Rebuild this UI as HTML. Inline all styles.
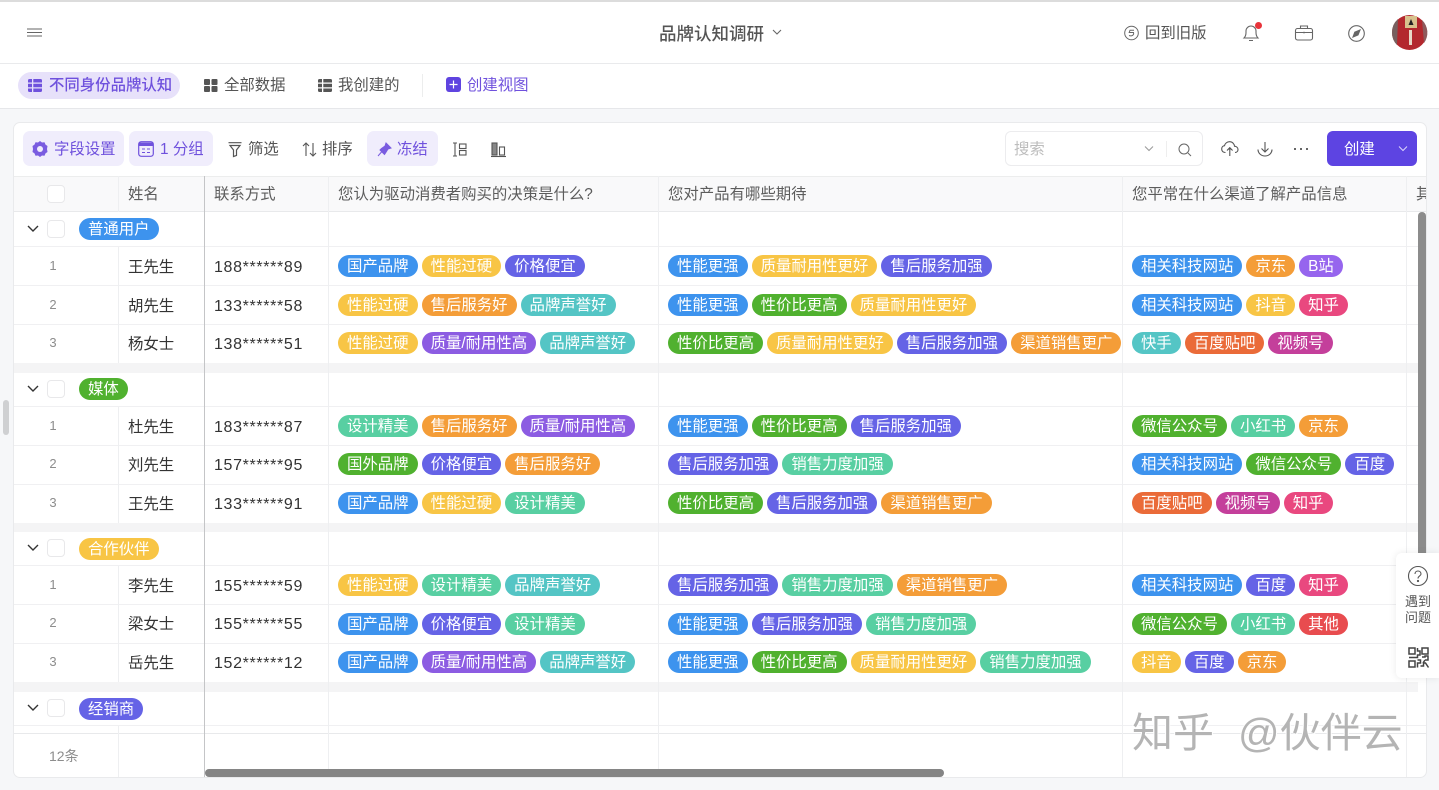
<!DOCTYPE html>
<html lang="zh-CN"><head><meta charset="utf-8"><title>品牌认知调研</title>
<style>
*{box-sizing:border-box}
html,body{margin:0;padding:0;width:1439px;height:790px;overflow:hidden;background:#f6f7f9;font-family:"Liberation Sans","Noto Sans CJK SC",sans-serif;color:#555}
.a{position:absolute;white-space:nowrap}
.l{position:absolute}
.hl{position:absolute;left:14px;width:1412px;height:1px;background:#f0f0f2}
.v{position:absolute;width:1px;background:#eeeff1}
.gap{position:absolute;left:14px;width:1404px;background:#f4f4f5}
.th{position:absolute;top:185px;font-size:15.4px;line-height:20px;color:#5c5c5c;white-space:nowrap}
.n{position:absolute;left:47px;width:12px;text-align:center;font-size:13px;line-height:16px;color:#8d8d8d}
.nm{position:absolute;left:128px;margin-top:1px;font-size:15.4px;line-height:20px;color:#333;white-space:nowrap}
.ph{position:absolute;left:214px;margin-top:1px;font-size:16px;letter-spacing:.65px;line-height:20px;color:#333;white-space:nowrap}
.cb{position:absolute;left:47px;width:18px;height:18px;border:1px solid #e8e8ea;border-radius:4px;background:#fff}
.ts{position:absolute;display:flex;gap:4px;height:22px}
.t{display:block;height:22px;line-height:24px;border-radius:11px;padding:0 9px;color:#fff;font-size:15.4px;white-space:nowrap}
.gt{position:absolute;left:79px;height:22px;line-height:24px;border-radius:11px;padding:0 9px;color:#fff;font-size:15.4px;white-space:nowrap}
.b{background:#3d93ee}.y{background:#f8c545}.i{background:#6563e6}.o{background:#f49d38}.c{background:#54c5c5}.p{background:#8c5ce2}.m{background:#58cfa2}.g{background:#50b12f}.k{background:#e9487f}.w{background:#c43f9b}.r{background:#ea6b39}.d{background:#e84c4f}.s{background:#9665ee}
.btn{position:absolute;top:131px;height:35px;background:#f0edfc;border-radius:7px}
.pur{color:#6f51dd;font-size:15.4px;line-height:20px;position:absolute;top:140px;white-space:nowrap}
.tool{color:#555;font-size:15.4px;line-height:20px;position:absolute;top:140px;white-space:nowrap}
svg{position:absolute;overflow:visible}
</style></head><body>

<!-- header -->
<div class="l" style="left:0;top:0;width:1439px;height:64px;background:#fff;border-top:1px solid #dcdcdc;border-bottom:1px solid #e9eaec;box-shadow:inset 0 1px 0 #dcdcdc"></div>
<svg style="left:27px;top:28px" width="16" height="10" fill="none" stroke="#666" stroke-width="1.1"><path d="M0 1h15M0 4.500h15M0 8h15"/></svg>
<div class="a" style="left:659px;top:23px;font-size:17.500px;line-height:22px;color:#555;font-weight:500">品牌认知调研</div>
<svg style="left:772px;top:29px" width="10" height="7" fill="none" stroke="#666" stroke-width="1.1"><path d="M1 1l4 4 4-4"/></svg>
<svg style="left:1124px;top:25px" width="16" height="16" fill="none" stroke="#666" stroke-width="1"><circle cx="7.500" cy="8" r="6.800"/><path d="M10 5.200H6L5.200 7.500h4.300c.7 2.500-1.500 4-4.500 3"/></svg>
<div class="a" style="left:1145px;top:23px;font-size:15.4px;line-height:21px;color:#555">回到旧版</div>
<svg style="left:1243px;top:24px" width="18" height="18" fill="none" stroke="#666" stroke-width="1.1"><path d="M1 14h14c-1.500-1.500-2-3-2-5.500V7a5 5 0 0 0-10 0v1.500C3 11 2.500 12.500 1 14zM6 16.500h4"/></svg>
<div class="l" style="left:1255px;top:22px;width:7px;height:7px;border-radius:50%;background:#e8333a"></div>
<svg style="left:1295px;top:25px" width="18" height="16" fill="none" stroke="#666" stroke-width="1.1"><rect x=".5" y="3.500" width="17" height="11.500" rx="2"/><path d="M5.500 3.500V1h7v2.500M.5 7.500h17M9 6.800v1.600"/></svg>
<svg style="left:1348px;top:25px" width="17" height="17" fill="none" stroke="#666" stroke-width="1.1"><circle cx="8.500" cy="8.500" r="7.800"/><path d="M12 5l-5.200 2.200L5 12l5-2z" fill="#666"/></svg>
<svg style="left:1392px;top:15px" width="35" height="35"><circle cx="17.500" cy="17.500" r="17.500" fill="#b3282e"/><path d="M6 4A17.500 17.500 0 0 0 0 17.500 17.500 17.500 0 0 0 5 30z" fill="#77605f"/><path d="M30 5a17.500 17.500 0 0 1 2 23z" fill="#8e5a5c"/><rect x="13" y="1" width="12" height="12" fill="#d8c28d"/><path d="M19 4l2.500 6h-5z" fill="#222"/><rect x="17" y="15" width="3" height="15" fill="#e8d8c8"/></svg>

<!-- view tabs -->
<div class="l" style="left:0;top:64px;width:1439px;height:45px;background:#fff;border-bottom:1px solid #e6e7ea"></div>
<div class="l" style="left:18px;top:72px;height:27px;width:162px;border-radius:14px;background:#e7e1fa"></div>
<svg style="left:28px;top:79px" width="14" height="13"><path d="M0 1.500Q0 0 1.500 0H4v3.500H0zM0 4.800h4v3.400H0zM0 9.500h4V13H1.500Q0 13 0 11.500zM5.300 0h7.200Q14 0 14 1.500v2H5.300zM5.300 4.800H14v3.400H5.300zM5.300 9.500H14v2q0 1.500-1.500 1.500H5.300z" fill="#6f51dd"/></svg>
<div class="a" style="left:49px;top:75px;font-size:15.4px;line-height:21px;color:#6f51dd;font-weight:500">不同身份品牌认知</div>
<svg style="left:204px;top:79px" width="14" height="13" fill="#555"><rect width="6" height="6" rx="1"/><rect x="7.500" width="6" height="6" rx="1"/><rect y="7" width="6" height="6" rx="1"/><rect x="7.500" y="7" width="6" height="6" rx="1"/></svg>
<div class="a" style="left:224px;top:75px;font-size:15.4px;line-height:21px;color:#555">全部数据</div>
<svg style="left:318px;top:79px" width="14" height="13"><path d="M0 1.500Q0 0 1.500 0H4v3.500H0zM0 4.800h4v3.400H0zM0 9.500h4V13H1.500Q0 13 0 11.500zM5.300 0h7.200Q14 0 14 1.500v2H5.300zM5.300 4.800H14v3.400H5.300zM5.300 9.500H14v2q0 1.500-1.500 1.500H5.300z" fill="#555"/></svg>
<div class="a" style="left:338px;top:75px;font-size:15.4px;line-height:21px;color:#555">我创建的</div>
<div class="l" style="left:422px;top:74px;width:1px;height:23px;background:#eceded"></div>
<svg style="left:446px;top:77px" width="15" height="15"><rect width="15" height="15" rx="3" fill="#5f44e0"/><path d="M3.500 7.500h8M7.500 3.500v8" stroke="#fff" stroke-width="1.200"/></svg>
<div class="a" style="left:467px;top:75px;font-size:15.4px;line-height:21px;color:#6f51dd">创建视图</div>

<!-- card -->
<div class="l" style="left:13px;top:122px;width:1414px;height:656px;background:#fff;border:1px solid #e9eaec;border-radius:7px"></div>

<!-- toolbar -->
<div class="btn" style="left:23px;width:101px"></div>
<svg style="left:32px;top:141px" width="16" height="16"><path d="M8 0l2 1.500 2.500-.2 1 2.300 2 1.400L15 8l.5 3-2 1.400-1 2.300-2.500-.2L8 16l-2-1.500-2.500.2-1-2.300-2-1.400L1 8 .5 5l2-1.400 1-2.300 2.500.2z" fill="#7a5ce0"/><circle cx="8" cy="8" r="3" fill="#f0edfc"/></svg>
<div class="pur" style="left:54px">字段设置</div>
<div class="btn" style="left:129px;width:84px"></div>
<svg style="left:138px;top:141px" width="16" height="16" fill="none"><rect x=".7" y=".7" width="14.600" height="14.600" rx="2.500" stroke="#6f51dd" stroke-width="1.200"/><path d="M1 1.500h14V5H1z" fill="#6f51dd"/><path d="M4 8h3M9 8h3M4 11.500h3M9 11.500h3" stroke="#6f51dd"/></svg>
<div class="pur" style="left:160px">1 分组</div>
<svg style="left:228px;top:142px" width="14" height="15" fill="none" stroke="#555" stroke-width="1.200"><path d="M.5.700h13M2 3.500h10L8.500 8v5.500l-3 1V8z" /></svg>
<div class="tool" style="left:248px">筛选</div>
<svg style="left:302px;top:142px" width="15" height="15" fill="none" stroke="#555" stroke-width="1.100"><path d="M4 14V1M1 4l3-3 3 3M11 1v13M8 11l3 3 3-3"/></svg>
<div class="tool" style="left:322px">排序</div>
<div class="btn" style="left:367px;width:71px"></div>
<svg style="left:377px;top:142px" width="15" height="15"><path d="M9 1l5 5-3 1-2.500 4-1 1.500L3 8l1.500-1.500 3.500-2.500zM4.500 10L1 14" fill="#7a5ce0" stroke="#7a5ce0"/></svg>
<div class="pur" style="left:397px">冻结</div>
<svg style="left:452px;top:142px" width="15" height="15" fill="none" stroke="#555" stroke-width="1.100"><path d="M3 1v13M1 1h4M1 14h4"/><rect x="7.500" y="2" width="6.500" height="4.500"/><rect x="7.500" y="8.500" width="6.500" height="4.500"/></svg>
<svg style="left:491px;top:142px" width="15" height="15" fill="none" stroke="#555" stroke-width="1.100"><path d="M0 14.500h15"/><rect x="1" y="1" width="5" height="12" fill="#888"/><rect x="8.500" y="5" width="5" height="8"/></svg>

<div class="l" style="left:1005px;top:131px;width:198px;height:35px;border:1px solid #ececee;border-radius:6px;background:#fff"></div>
<div class="a" style="left:1014px;top:139px;font-size:15.4px;line-height:21px;color:#bdbdbd">搜索</div>
<svg style="left:1144px;top:146px" width="10" height="6" fill="none" stroke="#999"><path d="M1 .5l4 4 4-4"/></svg>
<div class="l" style="left:1166px;top:141px;width:1px;height:16px;background:#eee"></div>
<svg style="left:1178px;top:143px" width="14" height="14" fill="none" stroke="#666"><circle cx="6" cy="6" r="5"/><path d="M10 10l3 3"/></svg>
<svg style="left:1221px;top:141px" width="18" height="16" fill="none" stroke="#555" stroke-width="1.100"><path d="M4.500 11.500C1.500 11.500.7 9.500.7 8 .7 6 2 4.800 3.500 4.700 4 2.500 6 .7 8.500.7c3 0 4.800 2.200 5 4.500 2 .2 3.500 1.500 3.500 3.300 0 1.500-1 3-3 3M8.800 15V7M6 9.500l2.800-2.800 2.800 2.800"/></svg>
<svg style="left:1257px;top:141px" width="16" height="16" fill="none" stroke="#555" stroke-width="1.100"><path d="M8 1v9.500M4.500 7.500L8 11l3.500-3.500M1 8.500a7 6.500 0 0 0 14 0"/></svg>
<div class="l" style="left:1294px;top:148px;width:2px;height:2px;background:#666;box-shadow:6px 0 0 #666,12px 0 0 #666"></div>
<div class="l" style="left:1327px;top:131px;width:90px;height:35px;border-radius:6px;background:#5d44e2"></div>
<div class="a" style="left:1344px;top:139px;font-size:15.4px;line-height:21px;color:#fff">创建</div>
<svg style="left:1398px;top:146px" width="10" height="6" fill="none" stroke="#ddd6fb"><path d="M1 .5l4 4 4-4"/></svg>

<!-- table header -->
<div class="l" style="left:14px;top:176px;width:1412px;height:36px;background:#f9f9fa;border-top:1px solid #eceded;border-bottom:1px solid #e8e9eb"></div>
<div class="cb" style="top:185px"></div>
<div class="th" style="left:128px">姓名</div>
<div class="th" style="left:214px">联系方式</div>
<div class="th" style="left:338px">您认为驱动消费者购买的决策是什么?</div>
<div class="th" style="left:668px">您对产品有哪些期待</div>
<div class="th" style="left:1132px">您平常在什么渠道了解产品信息</div>
<div class="th" style="left:1416px;width:10px;overflow:hidden">其</div>

<!-- row lines -->
<div class="hl" style="top:246px"></div><div class="hl" style="top:285px"></div><div class="hl" style="top:324px"></div>
<div class="gap" style="top:363px;height:10px"></div>
<div class="hl" style="top:406px"></div><div class="hl" style="top:445px"></div><div class="hl" style="top:484px"></div>
<div class="gap" style="top:523px;height:9px"></div>
<div class="hl" style="top:565px"></div><div class="hl" style="top:604px"></div><div class="hl" style="top:643px"></div>
<div class="gap" style="top:682px;height:10px"></div>
<div class="hl" style="top:725px"></div><div class="hl" style="top:733px;background:#e8e9eb"></div>

<!-- column lines -->
<div class="v" style="left:118px;top:176px;height:36px"></div>
<div class="v" style="left:118px;top:247px;height:116px"></div>
<div class="v" style="left:118px;top:407px;height:116px"></div>
<div class="v" style="left:118px;top:566px;height:116px"></div>
<div class="v" style="left:118px;top:726px;height:51px"></div>
<div class="v" style="left:204px;top:176px;height:601px;background:#c4c5c7"></div>
<div class="v" style="left:328px;top:176px;height:601px"></div>
<div class="v" style="left:658px;top:176px;height:601px"></div>
<div class="v" style="left:1122px;top:176px;height:601px"></div>
<div class="v" style="left:1406px;top:176px;height:601px"></div>

<!-- group 1 -->
<svg style="left:27px;top:225px" width="12" height="8" fill="none" stroke="#333" stroke-width="1.400"><path d="M1 1l5 5 5-5"/></svg>
<div class="cb" style="top:220px"></div><div class="gt b" style="top:218px">普通用户</div>
<div class="n" style="top:258px">1</div><div class="nm" style="top:257px">王先生</div><div class="ph" style="top:257px">188******89</div>
<div class="ts" style="left:338px;top:255px"><span class="t b">国产品牌</span><span class="t y">性能过硬</span><span class="t i">价格便宜</span></div>
<div class="ts" style="left:668px;top:255px"><span class="t b">性能更强</span><span class="t y">质量耐用性更好</span><span class="t i">售后服务加强</span></div>
<div class="ts" style="left:1132px;top:255px"><span class="t b">相关科技网站</span><span class="t o">京东</span><span class="t s">B站</span></div>

<div class="n" style="top:297px">2</div><div class="nm" style="top:296px">胡先生</div><div class="ph" style="top:296px">133******58</div>
<div class="ts" style="left:338px;top:294px"><span class="t y">性能过硬</span><span class="t o">售后服务好</span><span class="t c">品牌声誉好</span></div>
<div class="ts" style="left:668px;top:294px"><span class="t b">性能更强</span><span class="t g">性价比更高</span><span class="t y">质量耐用性更好</span></div>
<div class="ts" style="left:1132px;top:294px"><span class="t b">相关科技网站</span><span class="t y">抖音</span><span class="t k">知乎</span></div>

<div class="n" style="top:335px">3</div><div class="nm" style="top:334px">杨女士</div><div class="ph" style="top:334px">138******51</div>
<div class="ts" style="left:338px;top:332px"><span class="t y">性能过硬</span><span class="t p">质量/耐用性高</span><span class="t c">品牌声誉好</span></div>
<div class="ts" style="left:668px;top:332px"><span class="t g">性价比更高</span><span class="t y">质量耐用性更好</span><span class="t i">售后服务加强</span><span class="t o">渠道销售更广</span></div>
<div class="ts" style="left:1132px;top:332px"><span class="t c">快手</span><span class="t r">百度贴吧</span><span class="t w">视频号</span></div>

<!-- group 2 -->
<svg style="left:27px;top:385px" width="12" height="8" fill="none" stroke="#333" stroke-width="1.400"><path d="M1 1l5 5 5-5"/></svg>
<div class="cb" style="top:380px"></div><div class="gt g" style="top:378px">媒体</div>
<div class="n" style="top:418px">1</div><div class="nm" style="top:417px">杜先生</div><div class="ph" style="top:417px">183******87</div>
<div class="ts" style="left:338px;top:415px"><span class="t m">设计精美</span><span class="t o">售后服务好</span><span class="t p">质量/耐用性高</span></div>
<div class="ts" style="left:668px;top:415px"><span class="t b">性能更强</span><span class="t g">性价比更高</span><span class="t i">售后服务加强</span></div>
<div class="ts" style="left:1132px;top:415px"><span class="t g">微信公众号</span><span class="t m">小红书</span><span class="t o">京东</span></div>

<div class="n" style="top:456px">2</div><div class="nm" style="top:455px">刘先生</div><div class="ph" style="top:455px">157******95</div>
<div class="ts" style="left:338px;top:453px"><span class="t g">国外品牌</span><span class="t i">价格便宜</span><span class="t o">售后服务好</span></div>
<div class="ts" style="left:668px;top:453px"><span class="t i">售后服务加强</span><span class="t m">销售力度加强</span></div>
<div class="ts" style="left:1132px;top:453px"><span class="t b">相关科技网站</span><span class="t g">微信公众号</span><span class="t i">百度</span></div>

<div class="n" style="top:495px">3</div><div class="nm" style="top:494px">王先生</div><div class="ph" style="top:494px">133******91</div>
<div class="ts" style="left:338px;top:492px"><span class="t b">国产品牌</span><span class="t y">性能过硬</span><span class="t m">设计精美</span></div>
<div class="ts" style="left:668px;top:492px"><span class="t g">性价比更高</span><span class="t i">售后服务加强</span><span class="t o">渠道销售更广</span></div>
<div class="ts" style="left:1132px;top:492px"><span class="t r">百度贴吧</span><span class="t w">视频号</span><span class="t k">知乎</span></div>

<!-- group 3 -->
<svg style="left:27px;top:544px" width="12" height="8" fill="none" stroke="#333" stroke-width="1.400"><path d="M1 1l5 5 5-5"/></svg>
<div class="cb" style="top:539px"></div><div class="gt y" style="top:538px">合作伙伴</div>
<div class="n" style="top:577px">1</div><div class="nm" style="top:576px">李先生</div><div class="ph" style="top:576px">155******59</div>
<div class="ts" style="left:338px;top:574px"><span class="t y">性能过硬</span><span class="t m">设计精美</span><span class="t c">品牌声誉好</span></div>
<div class="ts" style="left:668px;top:574px"><span class="t i">售后服务加强</span><span class="t m">销售力度加强</span><span class="t o">渠道销售更广</span></div>
<div class="ts" style="left:1132px;top:574px"><span class="t b">相关科技网站</span><span class="t i">百度</span><span class="t k">知乎</span></div>

<div class="n" style="top:615px">2</div><div class="nm" style="top:614px">梁女士</div><div class="ph" style="top:614px">155******55</div>
<div class="ts" style="left:338px;top:613px"><span class="t b">国产品牌</span><span class="t i">价格便宜</span><span class="t m">设计精美</span></div>
<div class="ts" style="left:668px;top:613px"><span class="t b">性能更强</span><span class="t i">售后服务加强</span><span class="t m">销售力度加强</span></div>
<div class="ts" style="left:1132px;top:613px"><span class="t g">微信公众号</span><span class="t m">小红书</span><span class="t d">其他</span></div>

<div class="n" style="top:654px">3</div><div class="nm" style="top:653px">岳先生</div><div class="ph" style="top:653px">152******12</div>
<div class="ts" style="left:338px;top:651px"><span class="t b">国产品牌</span><span class="t p">质量/耐用性高</span><span class="t c">品牌声誉好</span></div>
<div class="ts" style="left:668px;top:651px"><span class="t b">性能更强</span><span class="t g">性价比更高</span><span class="t y">质量耐用性更好</span><span class="t m">销售力度加强</span></div>
<div class="ts" style="left:1132px;top:651px"><span class="t y">抖音</span><span class="t i">百度</span><span class="t o">京东</span></div>

<!-- group 4 -->
<svg style="left:27px;top:704px" width="12" height="8" fill="none" stroke="#333" stroke-width="1.400"><path d="M1 1l5 5 5-5"/></svg>
<div class="cb" style="top:699px"></div><div class="gt i" style="top:698px">经销商</div>
<div class="a" style="left:49px;top:746px;font-size:14px;line-height:20px;color:#8d8d8d">12条</div>

<!-- scrollbars -->
<div class="l" style="left:1418px;top:212px;width:8px;height:345px;border-radius:4px 4px 0 0;background:#8c8c8c"></div>
<div class="l" style="left:205px;top:769px;width:739px;height:8px;border-radius:4px;background:#858585"></div>
<div class="l" style="left:3px;top:400px;width:6px;height:35px;border-radius:3px;background:#cfd0d2"></div>

<!-- side panel -->
<div class="l" style="left:1396px;top:553px;width:43px;height:125px;background:#fff;border-radius:6px 0 0 6px;box-shadow:0 0 8px rgba(0,0,0,.09)"></div>
<svg style="left:1408px;top:566px" width="20" height="20" fill="none" stroke="#555" stroke-width="1.100"><circle cx="10" cy="10" r="9.500"/><path d="M7 8c0-4 6-4 6 0 0 2-3 2-3 4.500"/><circle cx="10" cy="15" r=".6" fill="#555"/></svg>
<div class="a" style="left:1405px;top:594px;font-size:13px;line-height:16px;color:#555;text-align:center;width:26px;white-space:normal">遇到问题</div>
<svg style="left:1408px;top:647px" width="21" height="21" fill="none" stroke="#444" stroke-width="1.500"><rect x="1" y="1" width="6" height="6"/><rect x="14" y="1" width="6" height="6"/><rect x="1" y="14" width="6" height="6"/><path d="M9.500 1v3h2.500v4H9.500v2.500H1M14 10h3v-1h3v4h-3M9.500 13h3v3h-3v4.500M12.500 19h3v-3h2l3 4.500M17 13l-2 3"/></svg>

<!-- watermark -->
<div class="a" style="left:1132px;top:709px;font-size:41px;line-height:48px;color:#b4b4b4;text-shadow:1px 1px 0 #fff,-1px 0 0 #fff">知乎</div>
<div class="a" style="left:1238px;top:709px;font-size:41px;line-height:48px;color:#b4b4b4;text-shadow:1px 1px 0 #fff,-1px 0 0 #fff">@伙伴云</div>
</body></html>
